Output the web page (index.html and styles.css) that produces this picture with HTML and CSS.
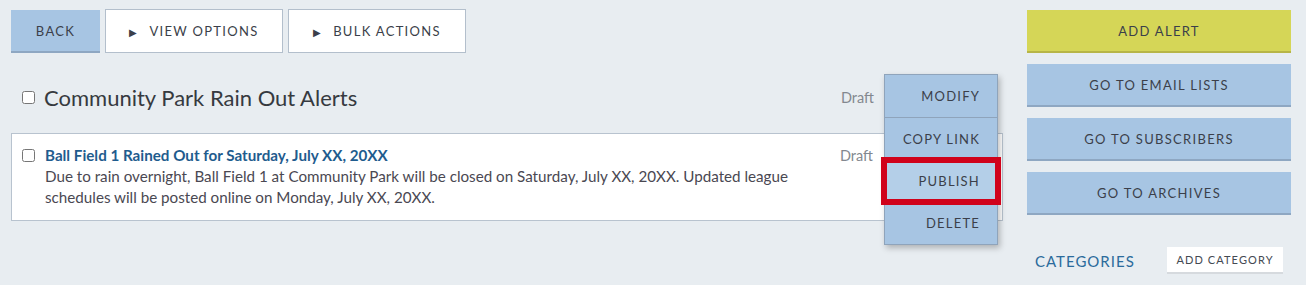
FILE: index.html
```html
<!DOCTYPE html>
<html lang="en">

<head>
    <meta charset="UTF-8">
    <meta name="viewport" content="width=device-width, initial-scale=1.0">
    <title>Alerts</title>
    <link rel="stylesheet" href="styles.css">
</head>

<body>
    <div class="page">
        <div class="main">
            <div class="toolbar">
                <button class="btn btn-blue btn-back">Back</button>
                <button class="btn btn-outline"><span class="arrow">&#9654;</span>View Options</button>
                <button class="btn btn-outline"><span class="arrow">&#9654;</span>Bulk Actions</button>
            </div>

            <div class="group-row">
                <input type="checkbox" class="check">
                <h2 class="group-title">Community Park Rain Out Alerts</h2>
                <span class="status">Draft</span>
            </div>

            <div class="alert-card">
                <input type="checkbox" class="check">
                <div class="alert-body">
                    <a class="alert-title">Ball Field 1 Rained Out for Saturday, July XX, 20XX</a>
                    <p class="alert-text">Due to rain overnight, Ball Field 1 at Community Park will be closed on Saturday, July XX, 20XX. Updated league schedules will be posted online on Monday, July XX, 20XX.</p>
                </div>
                <span class="status">Draft</span>
            </div>

            <!-- menu opened over the list -->
            <ul class="action-menu">
                <li class="menu-item first">Modify</li>
                <li class="menu-item">Copy Link</li>
                <li class="menu-item highlight">Publish</li>
                <li class="menu-item">Delete</li>
            </ul>
        </div>

        <div class="side">
            <button class="btn btn-yellow side-btn">Add Alert</button>
            <button class="btn btn-blue side-btn">Go to Email Lists</button>
            <button class="btn btn-blue side-btn">Go to Subscribers</button>
            <button class="btn btn-blue side-btn">Go to Archives</button>
            <div class="categories">
                <span class="categories-title">Categories</span>
                <button class="btn-small">Add Category</button>
            </div>
        </div>
    </div>
</body>

</html>
```

FILE: styles.css
```css
body {
    margin: 0;
    padding: 0;
    background: #e8edf1;
    font-family: Lato, "Open Sans", sans-serif;
    color: #3a3d44;
}

.page {
    display: grid;
    grid-template-columns: 992px 264px;
    column-gap: 24px;
    padding: 9px 11px 0;
}

.main {
    position: relative;
}

/* buttons */
.btn {
    font-family: inherit;
    font-size: 13px;
    letter-spacing: 1.3px;
    text-transform: uppercase;
    color: #3b3f4a;
    height: 43px;
    border: none;
    cursor: pointer;
    box-sizing: border-box;
}

.btn-blue {
    background: #a7c5e3;
    border-bottom: 2px solid #8ea7c2;
}

.btn-yellow {
    background: #d5d657;
    border-bottom: 2px solid #b7b547;
}

.btn-outline {
    background: #fff;
    border: 1px solid #b3bfcc;
    height: 44px;
}

.toolbar {
    display: flex;
    align-items: flex-end;
    gap: 5px;
}

.btn-back {
    width: 89px;
}

.toolbar .btn-outline {
    width: 178px;
}

.arrow {
    font-size: 10px;
    margin-right: 12px;
    letter-spacing: 0;
}

/* list */
.check {
    width: 13px;
    height: 13px;
    margin: 0;
    flex: none;
}

.group-row {
    display: flex;
    align-items: center;
    height: 26px;
    margin-top: 31px;
    padding: 0 129px 0 11px;
}

.group-title {
    margin: 0 0 0 9px;
    font-size: 22px;
    font-weight: normal;
    color: #363a40;
    flex: 1;
}

.status {
    font-size: 14.5px;
    color: #83888f;
}

.alert-card {
    display: flex;
    align-items: flex-start;
    background: #fff;
    border: 1px solid #b8c3cf;
    margin-top: 23px;
    padding: 11px 129px 12px 10px;
}

.alert-card .check {
    margin-top: 4px;
}

.alert-card .status {
    line-height: 21px;
}

.alert-body {
    flex: 1;
    margin-left: 10px;
    font-size: 15.2px;
    line-height: 21px;
}

.alert-title {
    display: block;
    font-weight: bold;
    color: #1f5c8e;
}

.alert-text {
    margin: 0;
    color: #4a4852;
}

/* action menu */
.action-menu {
    position: absolute;
    left: 873px;
    top: 65px;
    width: 112px;
    margin: 0;
    padding: 0;
    list-style: none;
    background: #a7c5e3;
    border: 1px solid #8fa4bb;
    box-shadow: 2px 3px 6px rgba(0, 0, 0, 0.25);
}

.menu-item {
    position: relative;
    height: 42px;
    line-height: 42px;
    text-align: right;
    padding-right: 17px;
    font-size: 13px;
    letter-spacing: 1.2px;
    text-transform: uppercase;
    color: #3b3f4a;
}

.menu-item.first {
    border-bottom: 1px solid #8fa4bb;
}

.menu-item.highlight {
    background: #b4cfe8;
}

.menu-item.highlight::before {
    content: "";
    position: absolute;
    left: -4px;
    right: -4px;
    top: -3px;
    bottom: -3px;
    border: 6px solid #d0021b;
}

/* side column */
.side {
    display: flex;
    flex-direction: column;
    gap: 11px;
    padding-top: 1px;
}

.side-btn {
    width: 100%;
}

.categories {
    display: flex;
    justify-content: space-between;
    align-items: center;
    padding: 21px 8px 0;
}

.categories-title {
    font-size: 15px;
    letter-spacing: 1px;
    text-transform: uppercase;
    color: #2b6b9c;
}

.btn-small {
    font-family: inherit;
    font-size: 11px;
    letter-spacing: 1.1px;
    text-transform: uppercase;
    color: #444a52;
    background: #fff;
    border: none;
    border-bottom: 2px solid #d6dade;
    width: 116px;
    height: 27px;
    cursor: pointer;
}
```
